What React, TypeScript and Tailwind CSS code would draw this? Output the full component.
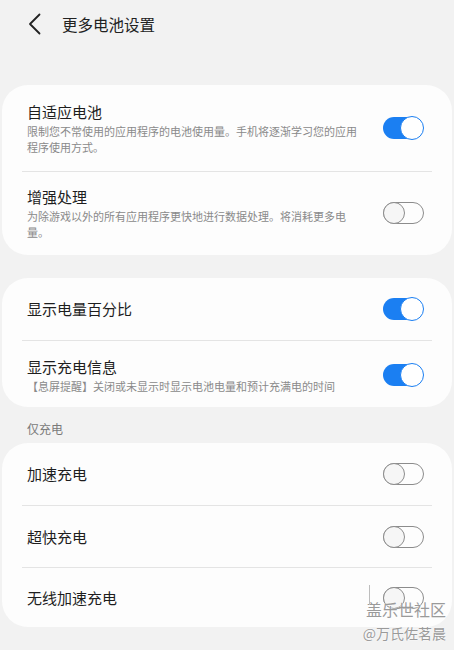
import React from "react";

const font = { fontFamily: '"Noto Sans CJK SC", "Noto Sans", sans-serif' };

function Toggle({ on }: { on: boolean }) {
  if (on) {
    return (
      <div className="relative w-[41px] h-[24px] shrink-0">
        <div className="absolute left-0 top-[1px] w-[40px] h-[22px] rounded-full bg-[#1b7ff2]" />
        <div className="absolute right-0 top-0 w-[24px] h-[24px] rounded-full bg-white border-[1.5px] border-[#1b7ff2]" />
      </div>
    );
  }
  return (
    <div className="relative w-[41px] h-[24px] shrink-0">
      <div className="absolute left-0 top-[1px] w-[41px] h-[22px] rounded-full border-[1.5px] border-[#8c8c8c]" />
      <div className="absolute left-0 top-[1px] w-[22px] h-[22px] rounded-full bg-[#f6f6f6] border-[1.5px] border-[#8c8c8c]" />
    </div>
  );
}

function Divider() {
  return <div className="mx-[20px] h-px bg-[#e4e4e4]" />;
}

function Row({
  title,
  desc,
  on,
  className,
}: {
  title: string;
  desc?: string;
  on: boolean;
  className: string;
}) {
  return (
    <div className={`flex items-center pl-[25px] pr-[28px] ${className}`}>
      <div className="flex-1 min-w-0 pr-[21px]">
        <div className="text-[15px] leading-[22px] text-[#1e1e1e]">{title}</div>
        {desc && (
          <div className="text-[11px] leading-[16px] text-[#8a8a8a]">{desc}</div>
        )}
      </div>
      <Toggle on={on} />
    </div>
  );
}

export default function App() {
  return (
    <div className="relative w-[454px] h-[650px] bg-[#f2f2f2] overflow-hidden" style={font}>
      {/* Header */}
      <div className="h-[85px] flex items-start pt-[13px]">
        <div className="flex items-center h-[22px]">
          <svg width="13" height="22" viewBox="0 0 13 22" className="ml-[28px]">
            <path d="M11.5 1.5 L2 11 L11.5 20.5" fill="none" stroke="#222" strokeWidth="1.8" strokeLinecap="round" strokeLinejoin="round" />
          </svg>
          <div className="ml-[21px] text-[15.5px] leading-[22px] text-[#222]">更多电池设置</div>
        </div>
      </div>

      <div className="px-[2px]">
        {/* Card 1 */}
        <div className="rounded-[26px] bg-[#fdfdfd]">
          <Row
            title="自适应电池"
            desc="限制您不常使用的应用程序的电池使用量。手机将逐渐学习您的应用程序使用方式。"
            on={true}
            className="pt-[16px] pb-[16px]"
          />
          <Divider />
          <Row
            title="增强处理"
            desc="为除游戏以外的所有应用程序更快地进行数据处理。将消耗更多电量。"
            on={false}
            className="pt-[14px] pb-[15px]"
          />
        </div>

        {/* Card 2 */}
        <div className="mt-[23px] rounded-[26px] bg-[#fdfdfd]">
          <Row title="显示电量百分比" on={true} className="h-[62px]" />
          <Divider />
          <Row
            title="显示充电信息"
            desc="【息屏提醒】关闭或未显示时显示电池电量和预计充满电的时间"
            on={true}
            className="pt-[15px] pb-[13px]"
          />
        </div>

        <div className="mt-[14px] mb-[6px] pl-[25px] text-[12px] leading-[16px] text-[#7a7a7a]">仅充电</div>

        {/* Card 3 */}
        <div className="rounded-[26px] bg-[#fdfdfd]">
          <Row title="加速充电" on={false} className="h-[62px]" />
          <Divider />
          <Row title="超快充电" on={false} className="h-[61px]" />
          <Divider />
          <Row title="无线加速充电" on={false} className="h-[59px]" />
        </div>
      </div>

      {/* Watermark */}
      <div
        className="absolute right-[8px] top-[599px] flex flex-col items-end text-[#9a9a9a]"
        style={{ textShadow: "0 0 2px #fff, 0 0 1px #fff" }}
      >
        <div className="text-[16px] leading-[20px] tracking-[0px]">盖乐世社区</div>
        <div className="mt-[5px] text-[14px] leading-[18px]">@万氏佐茗晨</div>
      </div>
      <div className="absolute left-[369px] top-[585px] w-px h-[20px] bg-[#bdbdbd]" />
    </div>
  );
}
